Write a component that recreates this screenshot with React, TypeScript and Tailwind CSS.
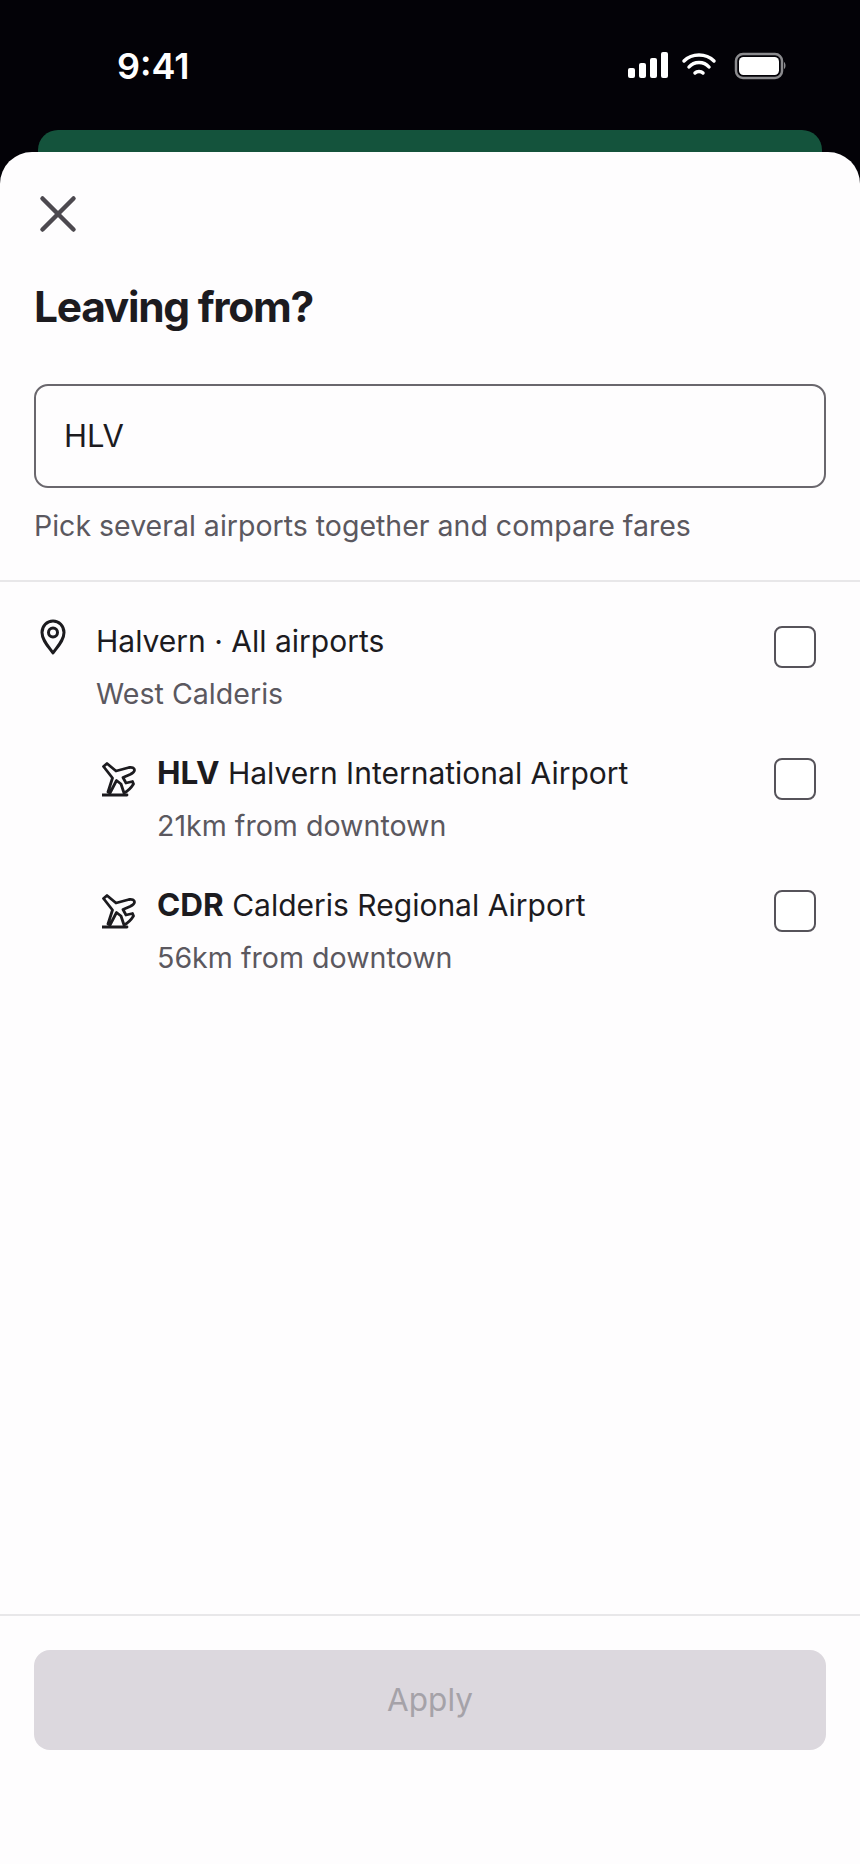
import { X } from 'lucide-react'

const PinIcon = () => (
  <svg width="28" height="36" viewBox="0 0 28 36" fill="none" stroke="#1c1b1f" strokeWidth="3" className="shrink-0">
    <path d="M14 34 C9 27 3 21 3 13.500 C3 7 8 2 14 2 C20 2 25 7 25 13.500 C25 21 19 27 14 34 Z" strokeLinejoin="round" />
    <circle cx="14" cy="13.500" r="4.500" />
  </svg>
)

const PlaneIcon = () => (
  <svg width="36" height="36" viewBox="0 0 36 36" fill="none" stroke="#1c1b1f" strokeWidth="2.800" strokeLinejoin="round" className="shrink-0">
    <path d="M1.500 4.500 L5 1.500 L14 9 L27 5.500 C30 5 32.500 6 32.500 8 C32.500 10 30 11.500 28 12.500 L21 15.500 L24 21 L30.500 19.500 L31.500 22 C29 26 26 29 22 31 L19 22 L14.500 18.500 L8 31 L6 30 L10.500 16 Z" />
    <path d="M0 33 H25" strokeLinecap="round" />
  </svg>
)

const Checkbox = () => (
  <div className="h-[42px] w-[42px] shrink-0 rounded-[8px] border-2 border-[#56535a] bg-white" />
)

const Row = ({ icon, title, sub, indent }: { icon: React.ReactNode; title: React.ReactNode; sub: string; indent?: boolean }) => (
  <div className={`flex h-[132px] items-start pr-[44px] ${indent ? 'pl-[102px]' : 'pl-[39px]'}`}>
    <div className={`flex shrink-0 ${indent ? 'w-[55px] pt-[11px]' : 'w-[57px]'}`}>{icon}</div>
    <div className="min-w-0 flex-1">
      <div className="text-[30px] leading-[44px] text-[#1c1b1f]">{title}</div>
      <div className="mt-[9px] text-[28.6px] leading-[44px] text-[#5b585f]">{sub}</div>
    </div>
    <div className="pt-[7px]">
      <Checkbox />
    </div>
  </div>
)

export default function App() {
  return (
    <div className="flex h-[1864px] w-[860px] flex-col overflow-hidden bg-[#030207] font-['Inter',sans-serif]">
      <div className="flex h-[130px] shrink-0 items-start justify-between pl-[117px] pr-[72px] pt-[44px]">
        <span className="text-[36px] font-semibold leading-[44px] text-white">9:41</span>
        <svg width="160" height="30" viewBox="0 0 160 30" className="mt-[6px]" fill="white">
          <rect x="0" y="18" width="7" height="10" rx="2" />
          <rect x="11" y="13" width="7" height="15" rx="2" />
          <rect x="22" y="8" width="7" height="20" rx="2" />
          <rect x="33" y="2" width="7" height="26" rx="2" />
          <g fill="none" stroke="white" strokeWidth="3.500" strokeLinecap="round">
            <path d="M56 11 C64 3 78 3 86 11" />
            <path d="M61 17 C66 11 76 11 81 17" />
            <path d="M67 23 C69 21 73 21 75 23" />
          </g>
          <rect x="108" y="4" width="46" height="24" rx="7" fill="none" stroke="#8b8b8e" strokeWidth="2.500" />
          <rect x="111" y="7" width="40" height="18" rx="4.500" />
          <path d="M156 12 C158 13 158 18 156 19 Z" fill="#8b8b8e" />
        </svg>
      </div>
      <div className="mx-[38px] h-[40px] shrink-0 rounded-t-[20px] bg-[#14533c]" />
      <div className="-mt-[18px] flex min-h-0 flex-1 flex-col rounded-t-[32px] bg-[#fefdfe]">
        <div className="flex h-[124px] shrink-0 items-center pl-[27px]">
          <X size={62} strokeWidth={4.5} color="#4c494f" absoluteStrokeWidth />
        </div>
        <h1 className="ml-[34px] mt-[3px] text-[42.500px] font-bold leading-[56px] tracking-[-1.300px] text-[#1c1b1f]">Leaving from?</h1>
        <div className="mx-[34px] mt-[49px] flex h-[104px] items-center rounded-[14px] border-2 border-[#6a676d] pl-[28px] text-[31px] text-[#1c1b1f]">
          <span className="pt-[1px]">HLV</span>
        </div>
        <p className="ml-[34px] mt-[16px] text-[28.500px] leading-[44px] text-[#5b585f]">Pick several airports together and compare fares</p>
        <div className="mt-[32px] h-[2px] shrink-0 bg-[#e8e7e9]" />
        <div className="flex-1 pt-[37px]">
          <Row icon={<PinIcon />} title="Halvern · All airports" sub="West Calderis" />
          <Row
            indent
            icon={<PlaneIcon />}
            title={<><b className="text-[31.500px] font-bold">HLV</b> Halvern International Airport</>}
            sub="21km from downtown"
          />
          <Row
            indent
            icon={<PlaneIcon />}
            title={<><b className="text-[31.500px] font-bold">CDR</b> Calderis Regional Airport</>}
            sub="56km from downtown"
          />
        </div>
        <div className="h-[2px] shrink-0 bg-[#e8e7e9]" />
        <div className="h-[248px] shrink-0 px-[34px] pt-[34px]">
          <div className="flex h-[100px] items-center justify-center rounded-[16px] bg-[#dcd8de] text-[31.500px] text-[#a5a2a8]">Apply</div>
        </div>
      </div>
    </div>
  )
}
